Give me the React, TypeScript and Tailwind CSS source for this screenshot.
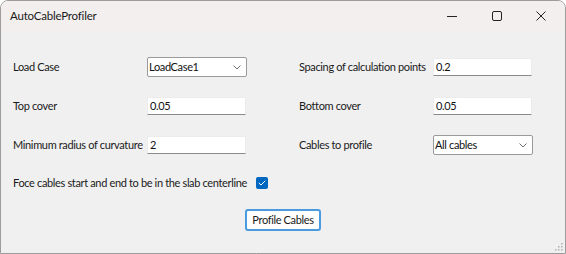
import React from "react";

const font = { fontFamily: 'Lato, "Liberation Sans", sans-serif' };

function Chevron() {
  return (
    <svg width="8" height="5" viewBox="0 0 8 5" className="shrink-0">
      <path d="M0.5 0.5 L4 4 L7.5 0.5" fill="none" stroke="#707070" strokeWidth="1" />
    </svg>
  );
}

function TextBox({ value }: { value: string }) {
  return (
    <div className="h-[18px] w-[99px] shrink-0 bg-white border border-[#ececec] border-b-[#8a8a8a] flex items-center pl-[2px] text-[11px] tracking-[-0.35px] text-[#111]">
      {value}
    </div>
  );
}

function Combo({ value }: { value: string }) {
  return (
    <div className="h-[20px] w-[100px] shrink-0 bg-white border border-[#9a9a9a] rounded-[2px] flex items-center justify-between pl-[1px] pr-[5px] text-[11px] tracking-[-0.35px] text-[#111]">
      <span className="whitespace-nowrap">{value}</span>
      <Chevron />
    </div>
  );
}

function Row({ label, children }: { label: string; children: React.ReactNode }) {
  return (
    <div className="flex items-center h-[20px]">
      <div className="w-[134px] shrink-0 text-[11px] tracking-[-0.35px] text-[#1a1a1a] whitespace-nowrap">{label}</div>
      {children}
    </div>
  );
}

export default function App() {
  return (
    <div style={font} className="w-[566px] h-[254px] bg-[#f0f0f0] border border-[#9c9c9c] rounded-t-[8px] overflow-hidden flex flex-col relative">
      <div className="h-[30px] bg-[#f3efef] flex items-center shrink-0">
        <div className="pl-[9px] text-[11.5px] tracking-[-0.2px] text-[#1a1a1a] flex-1">AutoCableProfiler</div>
        <div className="flex items-center h-full">
          <div className="w-[46px] h-full flex items-center justify-center">
            <svg width="10" height="10" viewBox="0 0 10 10"><path d="M0 5.5 H10" stroke="#222" strokeWidth="1" /></svg>
          </div>
          <div className="w-[44px] h-full flex items-center justify-center">
            <svg width="10" height="10" viewBox="0 0 10 10"><rect x="0.5" y="0.5" width="9" height="9" rx="1.5" fill="none" stroke="#222" strokeWidth="1" /></svg>
          </div>
          <div className="w-[46px] h-full flex items-center justify-center pr-[2px]">
            <svg width="10" height="10" viewBox="0 0 10 10"><path d="M0.5 0.5 L9.5 9.5 M9.5 0.5 L0.5 9.5" stroke="#222" strokeWidth="1" /></svg>
          </div>
        </div>
      </div>
      <div className="flex flex-col pt-[26px] pl-[12px]">
        <div className="flex">
          <div className="flex flex-col gap-[19px] w-[286px] shrink-0">
            <Row label="Load Case"><Combo value="LoadCase1" /></Row>
            <Row label="Top cover"><TextBox value="0.05" /></Row>
            <Row label="Minimum radius of curvature"><TextBox value="2" /></Row>
          </div>
          <div className="flex flex-col gap-[19px]">
            <Row label="Spacing of calculation points"><TextBox value="0.2" /></Row>
            <Row label="Bottom cover"><TextBox value="0.05" /></Row>
            <Row label="Cables to profile"><Combo value="All cables" /></Row>
          </div>
        </div>
        <div className="flex items-center h-[20px] mt-[18px] text-[11px] tracking-[-0.35px] text-[#1a1a1a]">
          <span className="whitespace-nowrap">Foce cables start and end to be in the slab centerline</span>
          <div className="ml-[9px] w-[12px] h-[12px] rounded-[2px] bg-[#0067c0] flex items-center justify-center">
            <svg width="8" height="6" viewBox="0 0 8 6"><path d="M0.8 3 L3 5 L7.2 0.8" fill="none" stroke="white" strokeWidth="1" /></svg>
          </div>
        </div>
      </div>
      <div className="flex justify-center mt-[16px]">
        <div className="h-[22px] w-[76px] border-2 border-[#4a9ae0] rounded-[3px] bg-white flex items-center justify-center text-[11px] tracking-[-0.35px] text-[#1a1a1a] whitespace-nowrap">
          Profile Cables
        </div>
      </div>
      <div className="absolute right-[2px] bottom-[2px]">
        <svg width="8" height="8" viewBox="0 0 8 8" fill="#b0b0b0">
          <rect x="6" y="0" width="1.5" height="1.5" />
          <rect x="3" y="3" width="1.5" height="1.5" />
          <rect x="6" y="3" width="1.5" height="1.5" />
          <rect x="0" y="6" width="1.5" height="1.5" />
          <rect x="3" y="6" width="1.5" height="1.5" />
          <rect x="6" y="6" width="1.5" height="1.5" />
        </svg>
      </div>
    </div>
  );
}
